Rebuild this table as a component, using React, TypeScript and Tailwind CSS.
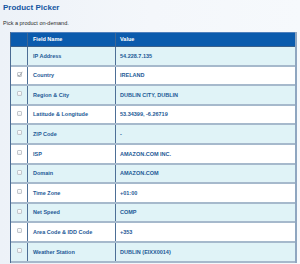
import React from "react";

const rows: { f: string; v: string; cb: boolean; checked?: boolean }[] = [
  { f: "IP Address", v: "54.228.7.135", cb: false },
  { f: "Country", v: "IRELAND", cb: true, checked: true },
  { f: "Region & City", v: "DUBLIN CITY, DUBLIN", cb: true },
  { f: "Latitude & Longitude", v: "53.34399, -6.26719", cb: true },
  { f: "ZIP Code", v: "-", cb: true },
  { f: "ISP", v: "AMAZON.COM INC.", cb: true },
  { f: "Domain", v: "AMAZON.COM", cb: true },
  { f: "Time Zone", v: "+01:00", cb: true },
  { f: "Net Speed", v: "COMP", cb: true },
  { f: "Area Code & IDD Code", v: "+353", cb: true },
  { f: "Weather Station", v: "DUBLIN (EIXX0014)", cb: true },
];

function Checkbox({ checked }: { checked?: boolean }) {
  return (
    <div className="relative w-[5px] h-[5px] rounded-[1px] border border-[#c3c7cc] bg-gradient-to-b from-white to-[#eceef0]">
      {checked && (
        <svg className="absolute left-[-1px] top-[-2px]" width="6" height="7" viewBox="0 0 6 7">
          <path d="M1 4 L2.4 5.4 L5.2 0.8" stroke="#9a9ea3" strokeWidth="0.9" fill="none" />
        </svg>
      )}
    </div>
  );
}

export default function App() {
  return (
    <div className="min-h-screen bg-gradient-to-r from-[#edf2f8] via-[#f4f7fb] to-[#f6f9fc] font-['Liberation_Sans',Arial,sans-serif]">
      <div className="pt-[3px] pl-[3px]">
        <div className="text-[8px] leading-[9px] font-bold text-[#1456a2]">Product Picker</div>
        <div className="mt-[7px] text-[5.5px] leading-[8px] text-[#2a2a2a]">Pick a product on-demand.</div>
      </div>
      <div className="mt-[5px] ml-[10px] w-[287px] border-l border-l-[#4a6b92] border-r-2 border-r-[#8fa6c0]">
        <div className="flex h-[15px] bg-[#0b5bad] border-t border-t-[#4f80bd] border-b border-b-[#3a5f8a] text-white font-bold text-[5.5px]">
          <div className="w-[17px] border-r border-r-[#3e6594]" />
          <div className="w-[88px] border-r border-r-[#3e6594] flex items-center pl-[5px]">Field Name</div>
          <div className="flex-1 flex items-center pl-[4px]">Value</div>
        </div>
        {rows.map((r, i) => (
          <div
            key={r.f}
            className={`flex h-[19.6px] border-b-2 border-b-[#a6b9cc] text-[#1d5996] font-bold text-[5.5px] ${
              i % 2 === 0 ? "bg-[#e0f3f7]" : "bg-white"
            }`}
          >
            <div className="w-[17px] border-r border-r-[#4d6f96] flex justify-center pt-[5px]">
              {r.cb && <Checkbox checked={r.checked} />}
            </div>
            <div className="w-[88px] border-r border-r-[#4d6f96] flex items-center pl-[5px]">{r.f}</div>
            <div className="flex-1 flex items-center pl-[4px]">{r.v}</div>
          </div>
        ))}
      </div>
    </div>
  );
}
